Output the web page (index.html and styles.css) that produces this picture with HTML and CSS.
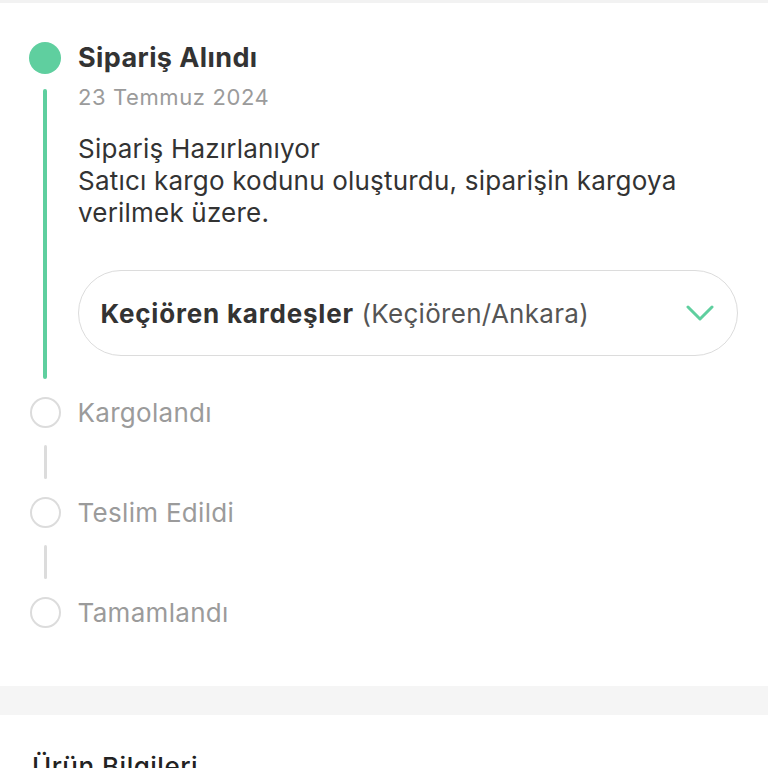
FILE: index.html
```html
<!DOCTYPE html>
<html lang="tr">
<head>
<meta charset="utf-8">
<title>Sipariş Durumu</title>
<link rel="stylesheet" href="styles.css">
</head>
<body>
<div class="topbar"></div>
<section class="timeline">
  <div class="step done">
    <div class="marker">
      <span class="dot"></span>
      <span class="line"></span>
    </div>
    <div class="content">
      <h2 class="title">Sipariş Alındı</h2>
      <div class="date">23 Temmuz 2024</div>
      <p class="desc">Sipariş Hazırlanıyor<br>Satıcı kargo kodunu oluşturdu, siparişin kargoya verilmek üzere.</p>
      <div class="pill">
        <span class="pill-text"><b>Keçiören kardeşler</b> <span class="loc">(Keçiören/Ankara)</span></span>
        <svg class="chev" width="28" height="18" viewBox="0 0 28 18"><path d="M2 3 L14 15 L26 3" fill="none" stroke="#5fcf9f" stroke-width="3" stroke-linecap="round" stroke-linejoin="round"/></svg>
      </div>
    </div>
  </div>
  <div class="step pending">
    <span class="ring"></span><span class="label">Kargolandı</span>
  </div>
  <div class="conn"></div>
  <div class="step pending">
    <span class="ring"></span><span class="label">Teslim Edildi</span>
  </div>
  <div class="conn"></div>
  <div class="step pending">
    <span class="ring"></span><span class="label">Tamamlandı</span>
  </div>
</section>
<div class="band"></div>
<section class="products">
  <h3 class="ptitle">Ürün Bilgileri</h3>
</section>
</body>
</html>
```
FILE: styles.css
```css
* { box-sizing: border-box; }
html, body { margin: 0; padding: 0; background: #fff; }
body {
  font-family: Inter, "Open Sans", "Liberation Sans", sans-serif;
  color: #333;
  width: 768px;
  overflow: hidden;
}
.topbar { height: 3px; background: #f2f2f2; }

.timeline { padding: 39px 30px 0 29px; }

.step.done {
  display: grid;
  grid-template-columns: 32px 1fr;
  column-gap: 17px;
}
.marker { display: flex; flex-direction: column; align-items: center; }
.dot { width: 32px; height: 32px; border-radius: 50%; background: #5fcf9f; }
.line { width: 4px; flex: 1; margin-top: 15px; background: #5fcf9f; border-radius: 2px; }

.content { padding-bottom: 23px; }
.title { margin: 0; font-size: 27px; font-weight: 700; line-height: 32px; color: #333; letter-spacing: 0.4px; }
.date { margin-top: 10px; font-size: 22px; line-height: 26px; color: #9b9b9b; letter-spacing: 0.6px; }
.desc { margin: 23px 0 0; font-size: 26px; line-height: 32px; color: #333; letter-spacing: 0.2px; }

.pill {
  margin-top: 41px;
  height: 86px;
  border: 1.5px solid #dcdcdc;
  border-radius: 43px;
  display: flex;
  align-items: center;
  justify-content: space-between;
  padding: 0 23.5px 0 21.5px;
}
.pill-text { font-size: 26px; color: #555; letter-spacing: 0.3px; }
.pill-text b { color: #333; font-weight: 700; letter-spacing: 0.8px; }
.chev { display: block; }

.step.pending {
  display: flex;
  align-items: center;
  gap: 17px;
  margin-top: 18px;
  padding-left: 0.5px;
}
.step.pending:first-of-type { margin-top: 17px; }
.ring { width: 31px; height: 31px; border-radius: 50%; border: 2px solid #dcdcdc; flex: none; }
.label { font-size: 26px; color: #9b9b9b; line-height: 30px; letter-spacing: 0.3px; }
.conn { width: 3px; height: 34px; margin: 17px 0 0 14.5px; background: #dcdcdc; border-radius: 2px; }

.band { height: 29px; background: #f5f5f5; margin-top: 58px; }
.products { padding: 36px 32px 0; }
.ptitle { margin: 0; font-size: 26px; font-weight: 500; color: #222; line-height: 32px; letter-spacing: 0.5px; }
```
